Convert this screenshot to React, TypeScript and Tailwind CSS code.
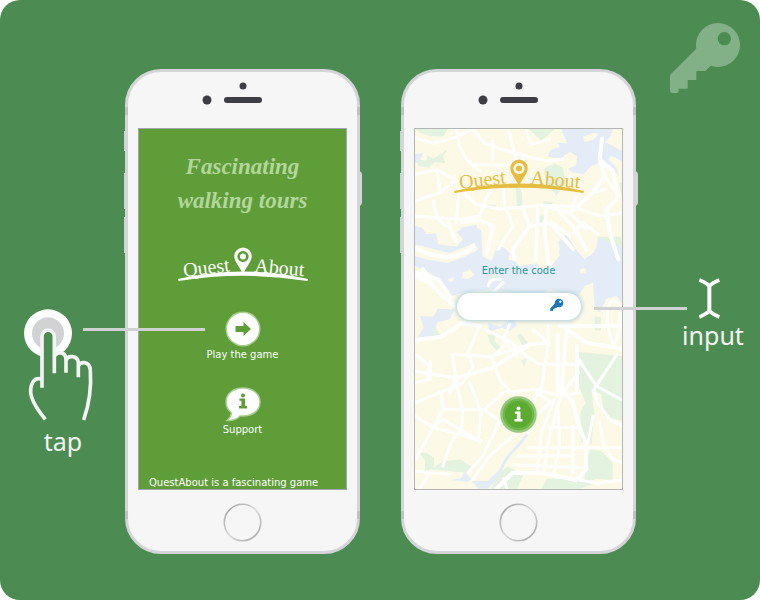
import type { ReactNode } from "react";

function BigKey() {
  return (
    <svg aria-hidden="true" viewBox="60 66 213 216" className="absolute top-[22px] right-[19px] h-[72px] w-[71px]">
      <path
        d="M150 135 L60 225 V270 Q60 279 70 279 H80 Q86 279 86 272 V266 H113 V240 H139 V213 H166 L190 190 Z"
        fill="#83b187"
      />
      <circle cx="204" cy="135" r="66" fill="#83b187" />
      <circle cx="223" cy="116" r="20" fill="#4c8c52" />
    </svg>
  );
}

function SmallKey() {
  return (
    <svg aria-hidden="true" viewBox="0 0 42 42" className="h-[14px] w-[14px]">
      <path d="M17 14 L1 31 V39 H9 V34 H14 V30 H19 L28 22 Z" fill="#1f74b5" />
      <circle cx="27" cy="15" r="13" fill="#1f74b5" />
      <circle cx="31" cy="11" r="3.5" fill="#fff" />
    </svg>
  );
}

function Logo({ className }: { className: string }) {
  return (
    <svg role="img" aria-label="Quest About" viewBox="0 0 132 37" className={`h-[37px] w-[132px] shrink-0 ${className}`}>
      <text
        transform="translate(7 31) rotate(-7)"
        fill="currentColor"
        className="font-['Liberation_Serif',serif] text-[20px]"
      >
        Quest
      </text>
      <text
        transform="translate(77 26) rotate(5)"
        fill="currentColor"
        className="font-['Liberation_Serif',serif] text-[20px]"
      >
        About
      </text>
      <path d="M1 33 Q66 18 131 33 L130.5 35 Q66 24.5 1.5 35 Z" fill="currentColor" />
      <path
        fillRule="evenodd"
        d="M66 1.5 a8.7 8.7 0 0 1 8.7 8.7 C74.7 16 69.5 20 66 28 C62.5 20 57.3 16 57.3 10.2 A8.7 8.7 0 0 1 66 1.5 Z M66 4.9 a5.6 5.6 0 1 0 0.01 0 Z"
        fill="currentColor"
      />
      <circle cx="66" cy="10.5" r="3" fill="currentColor" />
    </svg>
  );
}

function ArrowIcon() {
  return (
    <svg aria-hidden="true" viewBox="0 0 36 36" className="h-9 w-9">
      <circle cx="18" cy="18" r="17.5" fill="#a8cf90" />
      <circle cx="18" cy="18" r="16" fill="#fff" />
      <path d="M10.5 15 H18.5 V11 L26 18 L18.5 25 V21 H10.5 Z" fill="#5e9d38" />
    </svg>
  );
}

function InfoGlyph({ fill }: { fill: string }) {
  return (
    <g fill={fill}>
      <circle cx="0" cy="-5.5" r="2" />
      <path d="M-3.6 -2.6 H2 V5 H4 V7.4 H-4 V5 H-1.6 V-0.2 H-3.6 Z" />
    </g>
  );
}

function SupportIcon() {
  return (
    <svg aria-hidden="true" viewBox="0 0 36 36" className="h-9 w-9">
      <path
        d="M18 2 C28 2 35 8 35 16 C35 24.5 28 30 18 30 L15 30 Q10 35 2 34.5 Q6 31 6.5 27 Q1 22.5 1 16 C1 8 8 2 18 2 Z"
        fill="#fff"
        stroke="#a8cf90"
        strokeWidth="1.5"
      />
      <g transform="translate(18 15)">
        <InfoGlyph fill="#5e9d38" />
      </g>
    </svg>
  );
}

function InfoIcon() {
  return (
    <svg aria-hidden="true" viewBox="0 0 37 37" className="h-[37px] w-[37px]">
      <circle cx="18.5" cy="18.5" r="18.3" fill="#96c97c" />
      <circle cx="18.5" cy="18.5" r="15.8" fill="#70b64b" />
      <circle cx="18.5" cy="18.5" r="13.5" fill="#5bab30" />
      <g transform="translate(18.5 18)">
        <InfoGlyph fill="#fff" />
      </g>
    </svg>
  );
}

function CityMap() {
  return (
    <svg
      aria-hidden="true"
      viewBox="6 9 621 1080"
      preserveAspectRatio="xMidYMid slice"
      className="absolute inset-0 h-full w-full"
    >
      <rect width="640" height="1100" fill="#fdf9e7" />
      <g fill="#e4edf7">
        <path d="M445 9 H600 L590 35 L575 48 L600 60 L627 75 V105 L595 90 L585 100 L610 125 L618 150 L590 118 L565 108 L535 120 L512 145 L480 140 L465 128 L490 118 L492 90 L470 78 L440 98 L404 92 L412 72 L440 62 L434 50 L462 52 Z" />
        <path d="M6 300 L28 305 L40 325 L70 322 L76 355 L130 362 L150 340 L130 318 L150 305 L180 300 L205 312 L208 390 L235 405 L252 360 L275 365 L300 395 L318 420 L372 412 L385 430 L415 420 L440 388 L432 350 L460 325 L490 372 L515 400 L550 365 L555 335 L627 345 V530 L610 510 L580 518 L560 560 L545 545 L540 470 L515 480 L495 510 L455 505 L410 490 L375 510 L300 500 L235 490 L150 500 L110 512 L90 470 L50 440 L6 420 Z" />
        <path d="M22 570 L60 572 L75 548 L125 550 L110 580 L72 590 L62 632 L10 638 L32 605 Z" />
        <path d="M225 590 L262 602 L300 575 L312 598 L290 615 L265 605 L228 618 Z M6 85 L30 80 L18 110 H6 Z M145 305 L190 296 L198 322 L150 318 Z" />
        <path d="M115 1062 L145 1056 L155 1034 L174 1060 L165 1068 Z M175 1065 L225 1064 L262 1028 L270 1038 L225 1088 H198 Z" />
      </g>
      <path d="M344 920 Q330 945 300 975 T262 1040 L215 1082" fill="none" stroke="#e4edf7" strokeWidth="9" />
      <g fill="#fdf9e7">
        <path d="M510 32 L545 20 L556 25 L540 42 L515 48 Z M500 430 L516 425 L520 438 L503 444 Z M150 440 L170 430 L186 446 L165 460 L148 456 Z M106 460 L122 454 V466 L108 468 Z" />
        <path d="M6 355 L50 366 L110 382 L150 365 L185 350 L196 370 L160 390 L105 410 L50 402 L6 390 Z" />
        <path d="M285 400 L310 330 L325 300 H430 L440 372 L400 408 L335 412 Z M455 320 L490 290 L545 375 L530 390 L495 370 Z" />
      </g>
      <g fill="#e3f3df">
        <path d="M6 9 H105 L90 32 L52 30 L25 22 Z M12 98 L40 105 L42 88 L60 98 L102 72 L90 92 L98 112 L65 108 L48 125 L16 120 Z" />
        <path d="M346 9 H425 L385 45 L365 25 Z M390 130 L425 112 L450 125 L458 170 L430 210 L400 165 Z M308 180 L325 192 L330 245 L312 245 Z M392 226 L420 228 L415 240 L390 238 Z" />
        <path d="M222 236 L250 236 L244 248 L222 248 Z M378 268 L394 268 L390 290 L376 288 Z M552 332 L625 332 L627 362 L600 355 Z M618 170 H627 V212 Z M235 440 L262 455 L225 462 Z" />
        <path d="M64 602 L88 632 L55 640 Z M225 628 L248 622 L244 645 L268 668 L252 676 L230 650 Z M312 630 L322 622 L346 652 L336 668 Z M324 704 L342 696 L334 722 Z M544 572 H564 V615 L546 612 Z" />
        <path d="M497 678 L627 690 V884 L574 870 L565 805 L535 790 L544 860 L535 955 L504 948 L502 860 L518 830 L497 780 Z" />
        <path d="M530 970 L565 976 L600 1010 L598 1062 L552 1058 L512 1072 L518 1030 Z M385 1088 L402 1058 L490 1058 L540 1075 L500 1088 Z" />
        <path d="M262 1038 L284 1022 L332 1045 L312 1088 H232 Z M54 1030 L92 1006 L142 1000 L176 1022 L158 1040 L100 1034 Z M20 980 L40 980 L64 995 L62 1028 L36 1035 V1005 Z" />
      </g>
      <g fill="none" stroke="#fff" strokeWidth="9" strokeLinecap="round" strokeLinejoin="round">
        <path d="M6 36 L60 52 L125 35 L175 12 M130 9 L140 60 L160 100 L200 135 M180 9 L215 52 L260 68 L345 92 L405 105 L450 100" />
        <path d="M285 9 L300 62 L310 100 M238 45 V100 M340 12 L355 55 L410 40 M160 100 L180 115 L280 118 L330 100 M6 145 L72 132 L140 168 L160 210" />
        <path d="M72 132 L82 200 L6 225 M82 200 L130 160 M62 225 L70 275 L100 300 M140 170 L130 290 M160 210 L190 235 L260 250 L390 238 L480 242 L560 270 L627 262" />
        <path d="M6 270 L70 275 L150 280 L200 270 L220 215 L240 180 M270 170 L275 240 L300 300 L255 370" />
        <path d="M567 38 L560 100 L575 150 L540 200 L470 260 L400 240 M560 100 L600 135 L615 215 L580 250 L590 320 L616 400" strokeWidth="12" />
        <path d="M575 150 L610 200 M540 200 L580 190 M470 150 L500 190 L470 260 L520 310" />
        <path d="M6 368 Q85 402 130 388 T180 360" strokeWidth="12" />
        <path d="M106 290 L128 345 M150 290 L200 282 L240 300 L220 385 M330 250 L350 300 L300 370 L305 400 M375 250 L368 400 M400 245 L395 320 L410 440 M440 260 L480 300 L520 372 M420 300 L480 370" strokeWidth="11" />
        <path d="M480 320 L510 290 L555 325 M355 300 L420 290 L470 330" />
        <path d="M6 450 L50 470 L90 510 L128 542 M10 440 L75 460 L112 512 M6 642 L85 632 L150 590 L200 600 M30 430 L60 480" strokeWidth="12" />
        <path d="M225 480 Q232 455 262 460 M240 500 L270 470" />
        <path d="M600 522 Q578 535 584 590 T604 655 Q625 605 618 535 Z" />
        <path d="M440 600 H627 M455 605 L520 650 L627 668" strokeWidth="12" />
        <path d="M200 600 L165 680 L180 720 L150 770 M215 610 L290 645 L340 690 L380 715 H497 M405 600 V660 L395 720 L385 800" />
        <path d="M460 620 L452 715 L445 800 M434 625 V800 M492 660 V790 M405 650 L350 655 L240 725 L130 755 L110 800" strokeWidth="11" />
        <path d="M6 685 L50 720 L45 760 M118 685 L235 692 L350 655 M118 685 L128 755 M52 705 V760 L6 770 M6 735 L60 745 L128 755" />
        <path d="M612 685 L543 790 L553 830 L590 880 L627 900 M497 700 L550 780 L627 822" />
        <path d="M235 692 L262 765 L300 805 M290 645 L240 690 M290 595 L270 640 L310 690 M360 610 L395 640" />
        <path d="M150 770 L80 800 L6 830 M85 800 L90 850 L60 905 L25 970 L6 1000 M6 870 L60 905 L160 930 L205 945 M60 905 L90 880 L200 945" />
        <path d="M128 760 L150 860 L145 920 M90 850 L210 850 L260 885 M170 770 L205 860 L195 945 M215 850 L270 800 L370 790 L440 810 L500 800" />
        <path d="M305 925 L230 990 L180 1060 M260 885 L210 990 L165 1040 M130 925 L110 960 L90 1020" />
        <path d="M250 1088 L300 1040 L390 1042 L490 1062 L520 1030 L518 950 L495 890 L480 830 L440 780" strokeWidth="12" />
        <path d="M425 820 L385 920 L372 1040 M440 820 L405 950 L392 1040 M435 850 L440 960 L422 1040 M345 965 H627" />
        <path d="M315 990 H480 M300 1016 L510 1025 M405 905 L495 905 M480 900 V1040 M540 870 L525 950 M560 890 L572 955 L600 1000 L627 1010" />
        <path d="M500 1062 L552 1072 L627 1062 M360 880 L410 830 M20 1088 L50 1040 L110 1044 M6 1035 L50 1040 M272 1058 L282 1088" />
        <path d="M370 800 L420 830 M385 780 L360 830 M345 920 L350 880 M497 740 L450 800" />
      </g>
    </svg>
  );
}

function Phone({ children }: { children: ReactNode }) {
  return (
    <div className="relative w-[235px] shrink-0">
      <span className="absolute top-[62px] -left-px h-5 w-1 bg-[#d0d0d6]" />
      <span className="absolute top-[104px] -left-px h-9 w-1 bg-[#d0d0d6]" />
      <span className="absolute top-[148px] -left-px h-9 w-1 bg-[#d0d0d6]" />
      <span className="absolute top-[102px] -right-0.5 h-[35px] w-1 rounded-r-sm bg-[#d5d4da]" />
      <div className="relative flex flex-col items-stretch overflow-hidden rounded-[36px] border-[3px] border-[#d5d4d9] bg-[#f6f6f7] px-2.5">
        <div className="flex h-14 justify-center pt-2.5">
          <svg aria-hidden="true" viewBox="0 0 84 24" className="h-6 w-[84px]">
            <circle cx="42" cy="4" r="3.5" fill="#3d3d45" />
            <circle cx="6" cy="18" r="4.5" fill="#3d3d45" />
            <rect x="23" y="15" width="38" height="6" rx="3" fill="#3d3d45" />
          </svg>
        </div>
        {children}
        <div className="flex h-[61px] justify-center pt-[13px]">
          <svg aria-hidden="true" viewBox="0 0 39 39" className="h-[39px] w-[39px]">
            <defs>
              <linearGradient id="ring" x1="0" y1="0" x2="1" y2="1">
                <stop offset="0" stopColor="#9b9b9b" />
                <stop offset="0.5" stopColor="#dadada" />
                <stop offset="1" stopColor="#a0a0a0" />
              </linearGradient>
            </defs>
            <circle cx="19.5" cy="19.5" r="18.2" fill="none" stroke="url(#ring)" strokeWidth="1.6" />
          </svg>
        </div>
      </div>
      <span className="absolute top-[38px] left-0 h-2 w-[3px] bg-[#c0bfc5]" />
      <span className="absolute top-[38px] right-0 h-2 w-[3px] bg-[#c0bfc5]" />
      <span className="absolute bottom-[35px] left-0 h-2 w-[3px] bg-[#c0bfc5]" />
      <span className="absolute right-0 bottom-[35px] h-2 w-[3px] bg-[#c0bfc5]" />
    </div>
  );
}

function HomeScreen() {
  return (
    <section className="flex h-[362px] flex-col items-center overflow-hidden border border-[#a3a5ae] bg-[#5e9d38] text-[10px] leading-[15px] text-white">
      <h1 className="shrink-0 pt-[21px] text-center font-['Liberation_Serif',serif] text-[23px] leading-[34px] font-bold text-[#b3d69c] italic">
        Fascinating
        <br />
        walking tours
      </h1>
      <Logo className="mt-7 text-white" />
      <button type="button" className="mt-7 flex shrink-0 flex-col items-center">
        <ArrowIcon />
        Play the game
      </button>
      <button type="button" className="mt-6 flex shrink-0 flex-col items-center">
        <SupportIcon />
        Support
      </button>
      <p className="mt-[38px] shrink-0 self-start pl-2.5 whitespace-nowrap">QuestAbout is a fascinating game</p>
    </section>
  );
}

function CodeScreen() {
  return (
    <section className="relative h-[362px] overflow-hidden border border-[#b4b6b4]">
      <CityMap />
      <form className="relative flex flex-col items-center pt-[29px]">
        <Logo className="text-[#e5bd41]" />
        <label htmlFor="code" className="mt-[68px] text-[10px] leading-4 text-[#2b9696]">
          Enter the code
        </label>
        <div className="mt-[14px] flex h-[27px] w-[124px] items-center rounded-full bg-white pr-[17px] pl-3 shadow-[0_0_5px_1px_#a5cbd8]">
          <input id="code" type="text" autoComplete="off" className="min-w-0 flex-1 bg-transparent text-xs outline-none" />
          <button type="submit" aria-label="Submit the code" className="pb-1">
            <SmallKey />
          </button>
        </div>
        <button type="button" aria-label="Information" className="mt-[76px]">
          <InfoIcon />
        </button>
      </form>
    </section>
  );
}

function TapHint() {
  return (
    <aside className="relative min-w-0 flex-1">
      <div className="flex flex-col items-center pt-60">
        <svg aria-hidden="true" viewBox="66 57 243 336" className="h-28 w-[81px]">
          <circle cx="141" cy="130" r="72" fill="#fff" />
          <circle cx="141" cy="130" r="48" fill="#d0d2d3" />
          <g fill="none" stroke="#f3f3f3" strokeWidth="11">
            <path d="M123 293 V139 A18.5 18.5 0 0 1 160 139 V250" fill="#4c8c52" />
            <path d="M160 200 Q163 188 177 188 Q195 190 195 208 V248" />
            <path d="M195 212 Q198 199 214 200 Q232 202 232 220 V262" />
            <path d="M232 228 Q237 217 250 218 Q267 220 268 242 C272 300 262 350 248 390" />
            <path d="M124 268 Q106 262 97 274 C80 302 88 334 133 388" />
          </g>
        </svg>
        <p className="mt-1 text-[25px] leading-8 text-[#f3f3f3]">tap</p>
      </div>
      <span className="absolute top-[259px] -right-20 z-10 h-[3px] w-[122px] bg-[#cfd1d3]" />
    </aside>
  );
}

function InputHint() {
  return (
    <aside className="relative min-w-0 flex-1">
      <div className="flex flex-col items-center pt-[209px] pl-[30px]">
        <svg aria-hidden="true" viewBox="357 54 84 123" className="h-[41px] w-7">
          <g fill="none" stroke="#fff" strokeWidth="11">
            <path d="M358 60 Q372 65 388 77 Q404 65 418 60" />
            <path d="M358 171 Q372 166 388 154 Q404 166 418 171" />
            <path d="M388 76 V156" strokeWidth="12" />
          </g>
        </svg>
        <p className="text-[25px] leading-8 text-[#f3f3f3]">input</p>
      </div>
      <span className="absolute top-[238px] -left-[42px] z-10 h-[3px] w-[93px] bg-[#cfd1d3]" />
    </aside>
  );
}

export default function App() {
  return (
    <div className="bg-white">
      <main className="relative flex min-h-screen items-start rounded-[20px] bg-[#4c8c52] pt-[69px] pb-[46px] pl-px font-['Noto_Sans','Open_Sans',sans-serif]">
        <BigKey />
        <TapHint />
        <div className="flex gap-[41px] font-['DejaVu_Sans',sans-serif]">
          <Phone>
            <HomeScreen />
          </Phone>
          <Phone>
            <CodeScreen />
          </Phone>
        </div>
        <InputHint />
      </main>
    </div>
  );
}
